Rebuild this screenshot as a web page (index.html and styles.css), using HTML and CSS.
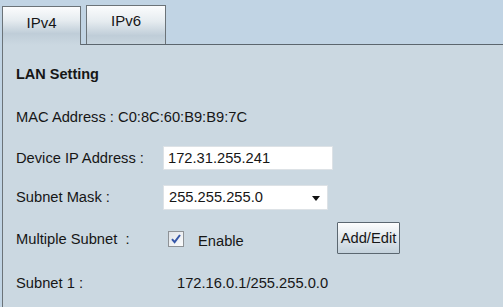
FILE: index.html
```html
<!DOCTYPE html>
<html lang="en">
<head>
  <meta charset="UTF-8" />
  <title>LAN Setting</title>
  <link rel="stylesheet" href="styles.css">
</head>
<body>
  <div class="tabs">
    <div class="tab active">IPv4</div>
    <div class="tab">IPv6</div>
  </div>

  <div class="panel">
    <div class="row row-title"><strong>LAN Setting</strong></div>
    <div class="row row-mac">MAC Address : C0:8C:60:B9:B9:7C</div>
    <div class="row row-ip">
      <span class="label">Device IP Address :</span>
      <input type="text" class="text-input" value="172.31.255.241" />
    </div>
    <div class="row row-mask">
      <span class="label">Subnet Mask :</span>
      <div class="select-box">
        <span>255.255.255.0</span>
        <span class="arrow"></span>
      </div>
    </div>
    <div class="row row-multi">
      <span class="label label-multi">Multiple Subnet&nbsp;&nbsp;:</span>
      <span class="checkbox">
        <svg width="14" height="14" viewBox="0 0 14 14">
          <path d="M3 7.2 L5.6 10.2 L11 3" fill="none" stroke="#3556a8" stroke-width="2"/>
        </svg>
      </span>
      <span class="enable">Enable</span>
      <button class="btn">Add/Edit</button>
    </div>
    <div class="row row-subnet">
      <span class="label label-subnet">Subnet 1 :</span>
      <span>172.16.0.1/255.255.0.0</span>
    </div>
  </div>
</body>
</html>
```

FILE: styles.css
```css
* {
  margin: 0;
  padding: 0;
  box-sizing: border-box;
  font-family: 'Liberation Sans', Arial, sans-serif;
}
body {
  background: #c1d4e4;
  color: #161616;
  font-size: 14.7px;
  height: 307px;
  display: flex;
  flex-direction: column;
  overflow: hidden;
}
.tabs {
  display: flex;
  align-items: flex-end;
  gap: 5px;
  padding-left: 2px;
  height: 44px;
}
.tab {
  width: 80px;
  height: 39px;
  border: 1px solid #6b7378;
  border-bottom: none;
  background: linear-gradient(#fbfcfd, #e6ecf0 40%, #bfcdd8 78%, #c8d5de);
  text-align: center;
  padding-top: 6px;
  font-size: 15px;
}
.tab.active {
  width: 79px;
  height: 39px;
  padding-top: 7px;
  margin-bottom: -1px;
  position: relative;
  z-index: 1;
  background: linear-gradient(#fbfcfd, #e6ecf0 35%, #bfcdd8 70%, #cbd8e1);
}
.panel {
  flex: 1;
  background: #cbd8e1;
  border-top: 1px solid #5c666e;
  border-left: 1px solid #6b7378;
  margin-left: 2px;
  padding: 9px 0 0 13px;
  display: flex;
  flex-direction: column;
}
.row {
  display: flex;
  align-items: center;
}
.row-title { height: 40px; font-size: 14.5px; }
.row-mac { height: 46px; }
.row-ip { height: 36px; }
.row-mask { height: 42px; }
.row-multi { height: 42px; }
.row-subnet { height: 46px; }
.label {
  width: 147px;
  flex: none;
}
.label-multi { width: 152px; }
.label-subnet { width: 161px; }
.text-input {
  width: 170px;
  height: 24px;
  border: 1px solid #dde2e6;
  background: #fff;
  padding-left: 4px;
  font-size: 14.7px;
  color: #161616;
  outline: none;
}
.select-box {
  width: 165px;
  height: 25px;
  border: 1px solid #dde2e6;
  background: #fff;
  padding: 0 7px 0 5px;
  display: flex;
  align-items: center;
  justify-content: space-between;
}
.arrow {
  width: 0;
  height: 0;
  border-left: 4px solid transparent;
  border-right: 4px solid transparent;
  border-top: 5px solid #111;
  margin-top: 2px;
}
.checkbox {
  width: 16px;
  height: 16px;
  border: 1px solid #8e9296;
  background: linear-gradient(135deg, #dfe3e8, #fbfcfd);
  display: flex;
  align-items: center;
  justify-content: center;
}
.enable {
  margin-left: 14px;
  margin-top: 3px;
  width: 139px;
}
.btn {
  width: 63px;
  height: 32px;
  border: 1px solid #5b6770;
  border-radius: 1px;
  background: linear-gradient(#fdfefe, #e3e9ee 45%, #c4d2dc);
  font-size: 14.7px;
  color: #161616;
  margin-top: -3px;
}
```
